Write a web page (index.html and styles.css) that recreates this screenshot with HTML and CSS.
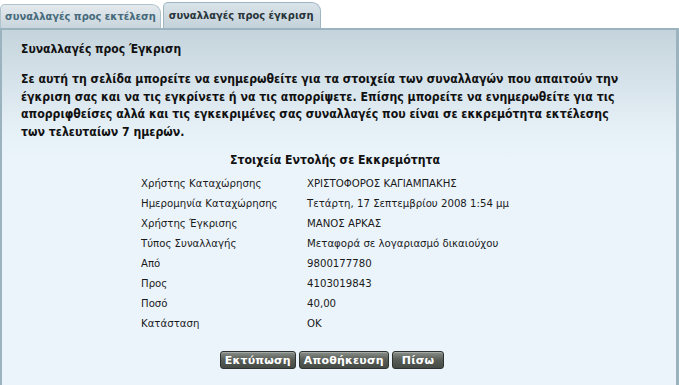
FILE: index.html
```html
<!DOCTYPE html>
<html lang="el">
<head>
    <meta charset="UTF-8">
    <title>Συναλλαγές προς Έγκριση</title>
    <link rel="stylesheet" href="styles.css">
</head>
<body>

    <div class="tabs">
        <a class="tab" href="#">συναλλαγές προς εκτέλεση</a>
        <a class="tab active" href="#">συναλλαγές προς έγκριση</a>
    </div>

    <div class="panel">
        <h1>Συναλλαγές προς Έγκριση</h1>
        <p class="intro">Σε αυτή τη σελίδα μπορείτε να ενημερωθείτε για τα στοιχεία των συναλλαγών που απαιτούν την έγκριση σας και να τις εγκρίνετε ή να τις απορρίψετε. Επίσης μπορείτε να ενημερωθείτε για τις απορριφθείσες αλλά και τις εγκεκριμένες σας συναλλαγές που είναι σε εκκρεμότητα εκτέλεσης των τελευταίων 7 ημερών.</p>

        <h2>Στοιχεία Εντολής σε Εκκρεμότητα</h2>
        <table class="details">
            <tr><td>Χρήστης Καταχώρησης</td><td>ΧΡΙΣΤΟΦΟΡΟΣ ΚΑΓΙΑΜΠΑΚΗΣ</td></tr>
            <tr><td>Ημερομηνία Καταχώρησης</td><td>Τετάρτη, 17 Σεπτεμβρίου 2008 1:54 μμ</td></tr>
            <tr><td>Χρήστης Έγκρισης</td><td>ΜΑΝΟΣ ΑΡΚΑΣ</td></tr>
            <tr><td>Τύπος Συναλλαγής</td><td>Μεταφορά σε λογαριασμό δικαιούχου</td></tr>
            <tr><td>Από</td><td>9800177780</td></tr>
            <tr><td>Προς</td><td>4103019843</td></tr>
            <tr><td>Ποσό</td><td>40,00</td></tr>
            <tr><td>Κατάσταση</td><td>OK</td></tr>
        </table>

        <div class="actions">
            <button type="button">Εκτύπωση</button>
            <button type="button">Αποθήκευση</button>
            <button type="button" class="back">Πίσω</button>
        </div>
    </div>

</body>
</html>
```

FILE: styles.css
```css
body {
    margin: 0;
    padding: 0;
    background-color: #ffffff;
    font-family: "DejaVu Sans Condensed", "DejaVu Sans", sans-serif;
    font-size: 11px;
    color: #1a1a1a;
}

/* tab strip */
.tabs {
    display: flex;
    align-items: flex-end;
    gap: 2px;
    height: 28px;
}

.tab {
    display: block;
    height: 23px;
    line-height: 23px;
    padding: 0 4px 0 4px;
    font-weight: bold;
    font-size: 11px;
    color: #466a7b;
    text-decoration: none;
    background: linear-gradient(to bottom, #e4eaee, #c8d5dc);
    border: 1px solid #b0c2cb;
    border-bottom: none;
    border-radius: 5px 9px 0 0;
}

.tab.active {
    height: 25px;
    line-height: 26px;
    padding: 0 6px 0 5px;
    color: #28343a;
    background: linear-gradient(to bottom, #d9e3e9, #c4d2da);
    border-color: #9fb5c1;
}

/* main panel */
.panel {
    border: 2px solid #9bb2bf;
    border-right-width: 3px;
    border-bottom: none;
    background: linear-gradient(to bottom, #c5d4dc 0, #e6f0f7 100px, #ebf4fb 130px, #ebf4fb);
    padding: 12px 19px 18px 19px;
    min-height: 340px;
}

.panel h1 {
    margin: 0;
    font-size: 12px;
    font-weight: bold;
    color: #111;
}

.intro {
    max-width: 612px;
    margin: 15px 0 0 0;
    font-size: 12.2px;
    font-weight: bold;
    line-height: 17.5px;
    color: #111;
}

.panel h2 {
    margin: 12px 0 0 0;
    padding-right: 8px;
    text-align: center;
    font-size: 12.2px;
    font-weight: bold;
    color: #111;
}

.details {
    margin: 7px auto 0 auto;
    border-collapse: collapse;
    table-layout: fixed;
    width: 396px;
}

.details td {
    height: 19.9px;
    padding: 0;
    font-size: 11.3px;
    color: #1a1a1a;
    vertical-align: middle;
    white-space: nowrap;
}

.details td:first-child {
    width: 166px;
}

.actions {
    display: flex;
    justify-content: center;
    gap: 3px;
    margin-top: 18px;
    padding-right: 14px;
}

.actions button {
    height: 18px;
    padding: 0 4px;
    font-family: "DejaVu Sans", Verdana, sans-serif;
    font-size: 11px;
    font-weight: bold;
    letter-spacing: 0.2px;
    color: #ffffff;
    background: linear-gradient(to bottom, #8a8f8a 0, #5b605b 45%, #454a45 100%);
    border: 1px solid #2f332f;
    border-radius: 3px;
    box-shadow: inset 0 1px 0 rgba(255, 255, 255, 0.25);
    cursor: pointer;
}

.actions button.back {
    padding: 0 9px;
}
```
